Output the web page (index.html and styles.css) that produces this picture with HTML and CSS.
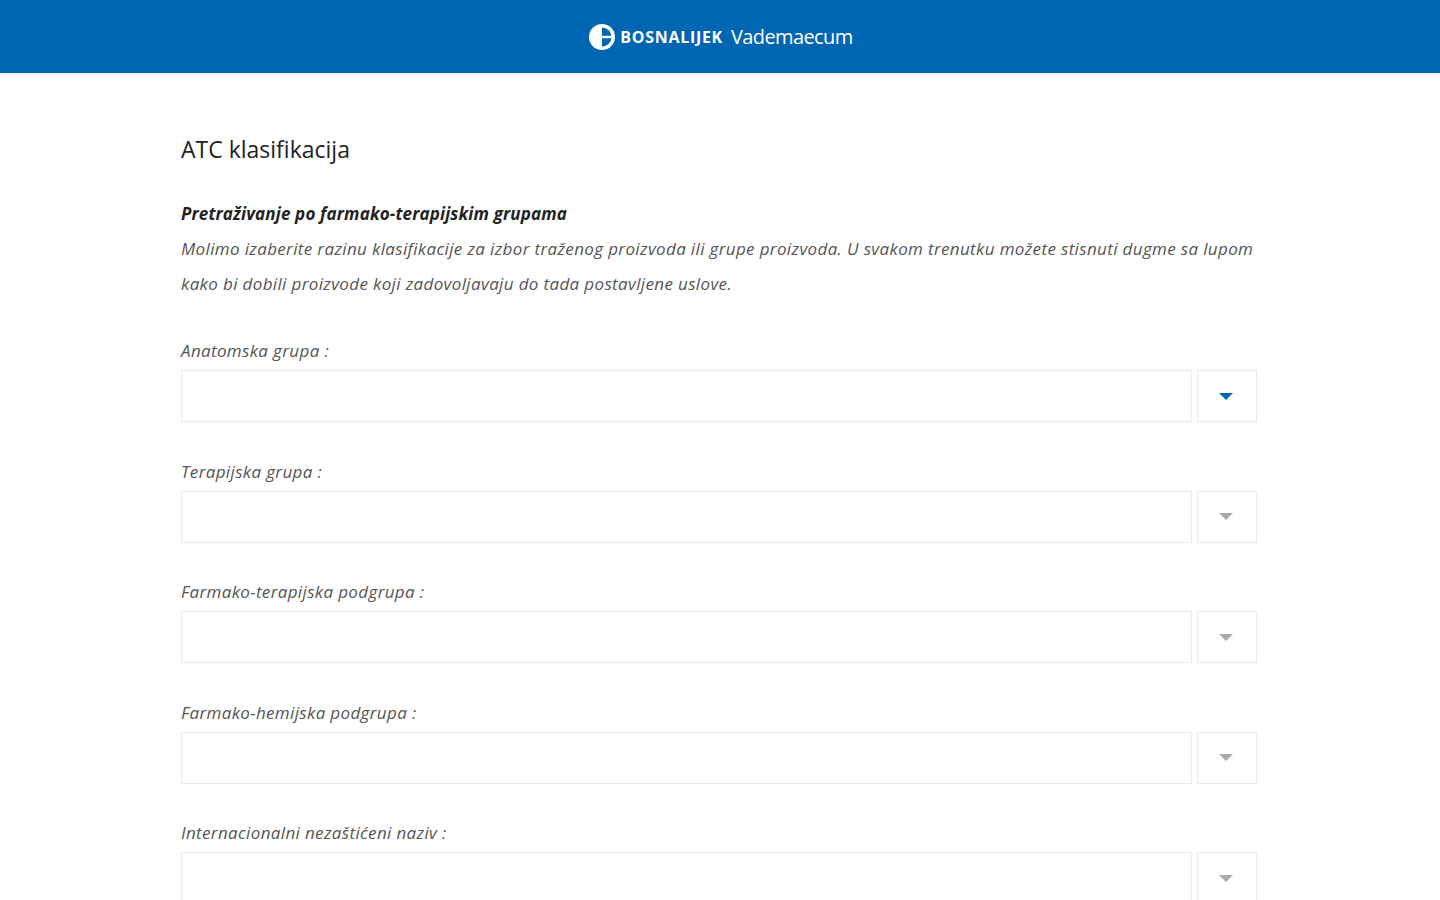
FILE: index.html
```html
<!DOCTYPE html>
<html lang="bs">

<head>
  <meta charset="utf-8" />
  <meta name="viewport" content="width=device-width, initial-scale=1" />
  <title>Vademaecum</title>
  <link rel="stylesheet" href="styles.css">
</head>

<body>
  <header class="top_bar">
    <svg class="logo_icon" width="26" height="28" viewBox="0 0 26 28">
      <circle cx="13" cy="14" r="13" fill="#fff" />
      <path d="M13 4.5a9.5 9.5 0 0 1 0 19z" fill="#0066b3" />
      <path d="M13 12.8h10v2.4h-10z" fill="#fff" />
    </svg>
    <span class="logo_name">BOSNALIJEK</span>
    <span class="logo_title">Vademaecum</span>
  </header>

  <main class="content">
    <h1 class="page_title">ATC klasifikacija</h1>

    <div class="intro">
      <p class="intro_head">Pretraživanje po farmako-terapijskim grupama</p>
      <p>Molimo izaberite razinu klasifikacije za izbor traženog proizvoda ili grupe proizvoda. U svakom trenutku možete stisnuti dugme sa lupom kako bi dobili proizvode koji zadovoljavaju do tada postavljene uslove.</p>
    </div>

    <div class="field">
      <label class="field_label">Anatomska grupa :</label>
      <div class="field_row">
        <div class="field_input"></div>
        <button type="button" class="field_btn active"><span class="arrow"></span></button>
      </div>
    </div>

    <div class="field">
      <label class="field_label">Terapijska grupa :</label>
      <div class="field_row">
        <div class="field_input"></div>
        <button type="button" class="field_btn"><span class="arrow"></span></button>
      </div>
    </div>

    <div class="field">
      <label class="field_label">Farmako-terapijska podgrupa :</label>
      <div class="field_row">
        <div class="field_input"></div>
        <button type="button" class="field_btn"><span class="arrow"></span></button>
      </div>
    </div>

    <div class="field">
      <label class="field_label">Farmako-hemijska podgrupa :</label>
      <div class="field_row">
        <div class="field_input"></div>
        <button type="button" class="field_btn"><span class="arrow"></span></button>
      </div>
    </div>

    <div class="field">
      <label class="field_label">Internacionalni nezaštićeni naziv :</label>
      <div class="field_row">
        <div class="field_input"></div>
        <button type="button" class="field_btn"><span class="arrow"></span></button>
      </div>
    </div>
  </main>
</body>

</html>
```

FILE: styles.css
```css
html,
body {
  height: 100%;
  overflow: hidden;
}

body {
  margin: 0;
  background: #fff;
  color: #333;
  font-family: "Open Sans", "Liberation Sans", sans-serif;
}

.top_bar {
  display: flex;
  align-items: center;
  justify-content: center;
  height: 73px;
  background: #0066b3;
  color: #fff;
}

.logo_icon {
  margin-left: 2px;
  margin-right: 5px;
}

.logo_name {
  font-size: 16px;
  font-weight: 700;
  letter-spacing: 0.7px;
  margin-right: 8px;
}

.logo_title {
  font-size: 20px;
  letter-spacing: -0.6px;
}

.content {
  width: 1078px;
  margin-left: 181px;
}

.page_title {
  margin: 59px 0 0;
  font-size: 23px;
  line-height: 34px;
  font-weight: 400;
  color: #222;
}

.intro {
  margin-top: 30px;
  margin-bottom: 38px;
  font-size: 17px;
  letter-spacing: 0.35px;
  line-height: 35px;
  font-style: italic;
  color: #555;
}

.intro p {
  margin: 0;
}

.intro .intro_head {
  font-weight: 700;
  letter-spacing: 0.15px;
  color: #222;
}

.field {
  height: 120.5px;
}

.field_label {
  display: block;
  height: 23px;
  font-size: 17px;
  letter-spacing: 0.35px;
  line-height: 24px;
  font-style: italic;
  color: #555;
}

.field_row {
  display: flex;
  gap: 5px;
  width: 1076px;
  height: 52px;
  margin-top: 8px;
}

.field_input {
  flex: 1;
  border: 1px solid #eaeaea;
}

.field_btn {
  display: flex;
  align-items: center;
  justify-content: center;
  width: 60px;
  padding: 0;
  background: #fff;
  border: 1px solid #eaeaea;
}

.arrow {
  width: 0;
  height: 0;
  margin-right: 2px;
  border-left: 7px solid transparent;
  border-right: 7px solid transparent;
  border-top: 7px solid #aaa;
}

.active .arrow {
  border-top-color: #0066b3;
}
```
